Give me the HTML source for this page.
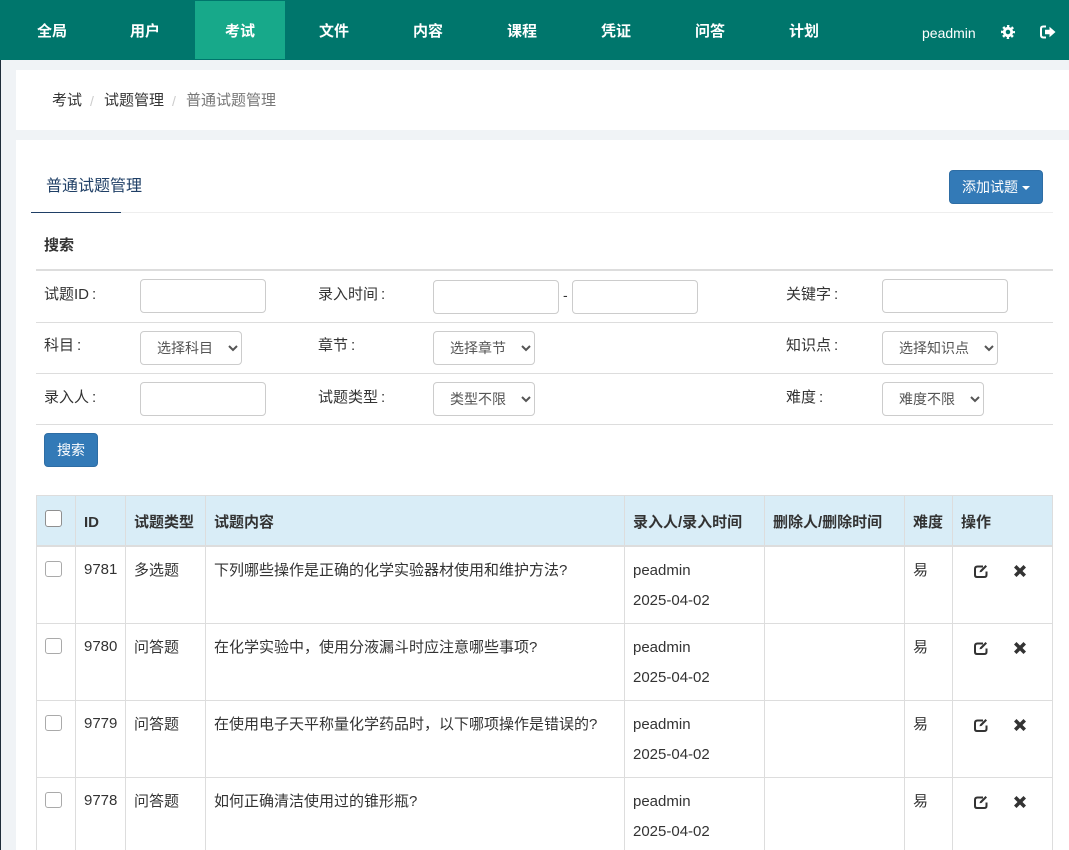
<!DOCTYPE html>
<html lang="zh-CN"><head><meta charset="utf-8"><title>普通试题管理</title>
<style>
html,body{margin:0;padding:0}
body{width:1069px;height:850px;overflow:hidden;position:relative;background:#f0f3f6;font-family:"Liberation Sans","Noto Sans CJK SC",sans-serif;font-size:15px;color:#333}
div,span.t,svg,input,select{position:absolute}
.t{position:absolute;line-height:20px;white-space:nowrap}
.n{font-weight:bold;color:#fff;top:22px;width:60px;text-align:center;font-size:15px}
.panel{background:#fff}
.l{background:#ddd;height:1px}
.v{background:#ddd;width:1px}
.ip{box-sizing:border-box;height:34px;width:126px;border:1px solid #ccc;border-radius:4px;background:#fff;margin:0;padding:0}
select{box-sizing:border-box;height:34px;border:1px solid #ccc;border-radius:4px;background:#fff;color:#555;font:14px "Liberation Sans","Noto Sans CJK SC",sans-serif;padding:0 6px 0 12px;margin:0}
.b{background:#337ab7;border:1px solid #2e6da4;border-radius:4px;box-sizing:border-box;color:#fff;font-size:14px;line-height:32px}
.h{font-weight:bold;top:513px}
.cb{appearance:none;-webkit-appearance:none;box-sizing:border-box;margin:0;width:17px;height:17px;background:#fff;border:1px solid #8f8f8f;border-radius:3px;left:45px}
.r{border-color:#aaa;height:16px}
.c{color:#333}
</style></head><body>
<div style="left:0;top:0;width:1069px;height:60px;background:#00766c"></div>
<div style="left:195px;top:1px;width:90px;height:58px;background:#17a98a"></div>
<span class="t n" style="left:22px">全局</span>
<span class="t n" style="left:115px">用户</span>
<span class="t n" style="left:210px">考试</span>
<span class="t n" style="left:304px">文件</span>
<span class="t n" style="left:398px">内容</span>
<span class="t n" style="left:492px">课程</span>
<span class="t n" style="left:586px">凭证</span>
<span class="t n" style="left:680px">问答</span>
<span class="t n" style="left:774px">计划</span>
<span class="t" style="left:922px;top:23px;color:#fff;font-size:14px">peadmin</span>
<svg style="left:1001px;top:25px" width="14" height="14" viewBox="0 0 14 14"><circle cx="7" cy="7" r="3.700" fill="none" stroke="#fff" stroke-width="2.900"/><circle cx="7" cy="7" r="5.800" fill="none" stroke="#fff" stroke-width="2.400" stroke-dasharray="2.280 2.275" stroke-dashoffset="1.140"/></svg>
<svg style="left:1040px;top:25px" width="16" height="14" viewBox="0 0 16 14"><path fill="none" stroke="#fff" stroke-width="2" d="M6 1.500H3.200Q1 1.500 1 3.700v6.600q0 2.200 2.200 2.200H6"/><path fill="#fff" d="M5 4.700h4.500V1.800L15.500 7l-6 5.200V9.300H5z"/></svg>
<div style="left:0;top:60px;width:1px;height:790px;background:#1f2d3a"></div>

<div class="panel" style="left:16px;top:70px;width:1053px;height:60px"></div>
<span class="t" style="left:52px;top:91px">考试</span>
<span class="t" style="left:90px;top:91px;color:#ccc;font-size:14px">/</span>
<span class="t" style="left:104px;top:91px">试题管理</span>
<span class="t" style="left:172px;top:91px;color:#ccc;font-size:14px">/</span>
<span class="t" style="left:186px;top:91px;color:#777">普通试题管理</span>

<div class="panel" style="left:16px;top:140px;width:1053px;height:710px"></div>
<span class="t" style="left:46px;top:177px;font-size:16px;color:#1f3f66">普通试题管理</span>
<div style="left:31px;top:212px;width:1022px;height:1px;background:#eee"></div>
<div style="left:31px;top:212px;width:90px;height:1px;background:#1f3f66"></div>
<div class="b" style="left:949px;top:170px;width:94px;height:34px;padding-left:12px">添加试题</div>
<div style="left:1022px;top:186px;width:0;height:0;border-left:4px solid transparent;border-right:4px solid transparent;border-top:4px solid #fff"></div>

<span class="t" style="left:44px;top:236px;font-weight:bold;font-size:15px">搜索</span>
<div class="l" style="left:36px;top:269px;width:1017px;height:2px"></div>
<div class="l" style="left:36px;top:322px;width:1017px"></div>
<div class="l" style="left:36px;top:373px;width:1017px"></div>
<div class="l" style="left:36px;top:424px;width:1017px"></div>

<span class="t" style="left:44px;top:285px">试题ID<span style="margin-left:3px">:</span></span>
<input class="ip" style="left:140px;top:279px">
<span class="t" style="left:318px;top:285px">录入时间<span style="margin-left:3px">:</span></span>
<input class="ip" style="left:433px;top:280px">
<span class="t" style="left:563px;top:285px;font-size:14px">-</span>
<input class="ip" style="left:572px;top:280px">
<span class="t" style="left:786px;top:285px">关键字<span style="margin-left:3px">:</span></span>
<input class="ip" style="left:882px;top:279px">

<span class="t" style="left:44px;top:336px">科目<span style="margin-left:3px">:</span></span>
<select style="left:140px;top:331px;width:102px"><option>选择科目</option></select>
<span class="t" style="left:318px;top:336px">章节<span style="margin-left:3px">:</span></span>
<select style="left:433px;top:331px;width:102px"><option>选择章节</option></select>
<span class="t" style="left:786px;top:336px">知识点<span style="margin-left:3px">:</span></span>
<select style="left:882px;top:331px;width:116px"><option>选择知识点</option></select>

<span class="t" style="left:44px;top:388px">录入人<span style="margin-left:3px">:</span></span>
<input class="ip" style="left:140px;top:382px">
<span class="t" style="left:318px;top:388px">试题类型<span style="margin-left:3px">:</span></span>
<select style="left:433px;top:382px;width:102px"><option>类型不限</option></select>
<span class="t" style="left:786px;top:388px">难度<span style="margin-left:3px">:</span></span>
<select style="left:882px;top:382px;width:102px"><option>难度不限</option></select>

<div class="b" style="left:44px;top:433px;width:54px;height:34px;text-align:center">搜索</div>

<!-- table -->
<div style="left:36px;top:495px;width:1017px;height:51px;background:#d9edf7"></div>
<div class="l" style="left:36px;top:495px;width:1017px"></div>
<div class="l" style="left:36px;top:545px;width:1017px;height:2px"></div>
<div class="l" style="left:36px;top:623px;width:1017px"></div>
<div class="l" style="left:36px;top:700px;width:1017px"></div>
<div class="l" style="left:36px;top:777px;width:1017px"></div>
<div class="v" style="left:36px;top:495px;height:355px"></div>
<div class="v" style="left:75px;top:495px;height:355px"></div>
<div class="v" style="left:125px;top:495px;height:355px"></div>
<div class="v" style="left:205px;top:495px;height:355px"></div>
<div class="v" style="left:624px;top:495px;height:355px"></div>
<div class="v" style="left:764px;top:495px;height:355px"></div>
<div class="v" style="left:904px;top:495px;height:355px"></div>
<div class="v" style="left:952px;top:495px;height:355px"></div>
<div class="v" style="left:1052px;top:495px;height:355px"></div>

<input type="checkbox" class="cb" style="top:510px">
<span class="t h" style="left:84px">ID</span>
<span class="t h" style="left:134px">试题类型</span>
<span class="t h" style="left:214px">试题内容</span>
<span class="t h" style="left:633px">录入人/录入时间</span>
<span class="t h" style="left:773px">删除人/删除时间</span>
<span class="t h" style="left:913px">难度</span>
<span class="t h" style="left:961px">操作</span>

<input type="checkbox" class="cb r" style="top:561px">
<span class="t" style="left:84px;top:560px">9781</span>
<span class="t" style="left:134px;top:561px">多选题</span>
<span class="t" style="left:214px;top:561px">下列哪些操作是正确的化学实验器材使用和维护方法?</span>
<span class="t" style="left:633px;top:561px">peadmin</span>
<span class="t" style="left:633px;top:591px">2025-04-02</span>
<span class="t" style="left:913px;top:561px">易</span>
<svg style="left:974px;top:564px" width="14" height="14" viewBox="0 0 14 14"><path fill="none" stroke="#333" stroke-width="2" d="M9 2.500H3.500Q1 2.500 1 5v6q0 2 2 2h7q2.500 0 2.500-2V7.500"/><path fill="#333" d="M6 6.500 11.500 1 13 2.500 7.500 8l-2 .3z"/></svg>
<svg style="left:1014px;top:565px" width="12" height="12" viewBox="0 0 12 12"><path fill="#333" d="M2.500 0 6 3.500 9.500 0 12 2.500 8.500 6 12 9.500 9.500 12 6 8.500 2.500 12 0 9.500 3.500 6 0 2.500z"/></svg>

<input type="checkbox" class="cb r" style="top:638px">
<span class="t" style="left:84px;top:637px">9780</span>
<span class="t" style="left:134px;top:638px">问答题</span>
<span class="t" style="left:214px;top:638px">在化学实验中，使用分液漏斗时应注意哪些事项?</span>
<span class="t" style="left:633px;top:638px">peadmin</span>
<span class="t" style="left:633px;top:668px">2025-04-02</span>
<span class="t" style="left:913px;top:638px">易</span>
<svg style="left:974px;top:641px" width="14" height="14" viewBox="0 0 14 14"><path fill="none" stroke="#333" stroke-width="2" d="M9 2.500H3.500Q1 2.500 1 5v6q0 2 2 2h7q2.500 0 2.500-2V7.500"/><path fill="#333" d="M6 6.500 11.500 1 13 2.500 7.500 8l-2 .3z"/></svg>
<svg style="left:1014px;top:642px" width="12" height="12" viewBox="0 0 12 12"><path fill="#333" d="M2.500 0 6 3.500 9.500 0 12 2.500 8.500 6 12 9.500 9.500 12 6 8.500 2.500 12 0 9.500 3.500 6 0 2.500z"/></svg>

<input type="checkbox" class="cb r" style="top:715px">
<span class="t" style="left:84px;top:714px">9779</span>
<span class="t" style="left:134px;top:715px">问答题</span>
<span class="t" style="left:214px;top:715px">在使用电子天平称量化学药品时，以下哪项操作是错误的?</span>
<span class="t" style="left:633px;top:715px">peadmin</span>
<span class="t" style="left:633px;top:745px">2025-04-02</span>
<span class="t" style="left:913px;top:715px">易</span>
<svg style="left:974px;top:718px" width="14" height="14" viewBox="0 0 14 14"><path fill="none" stroke="#333" stroke-width="2" d="M9 2.500H3.500Q1 2.500 1 5v6q0 2 2 2h7q2.500 0 2.500-2V7.500"/><path fill="#333" d="M6 6.500 11.500 1 13 2.500 7.500 8l-2 .3z"/></svg>
<svg style="left:1014px;top:719px" width="12" height="12" viewBox="0 0 12 12"><path fill="#333" d="M2.500 0 6 3.500 9.500 0 12 2.500 8.500 6 12 9.500 9.500 12 6 8.500 2.500 12 0 9.500 3.500 6 0 2.500z"/></svg>

<input type="checkbox" class="cb r" style="top:792px">
<span class="t" style="left:84px;top:791px">9778</span>
<span class="t" style="left:134px;top:792px">问答题</span>
<span class="t" style="left:214px;top:792px">如何正确清洁使用过的锥形瓶?</span>
<span class="t" style="left:633px;top:792px">peadmin</span>
<span class="t" style="left:633px;top:822px">2025-04-02</span>
<span class="t" style="left:913px;top:792px">易</span>
<svg style="left:974px;top:795px" width="14" height="14" viewBox="0 0 14 14"><path fill="none" stroke="#333" stroke-width="2" d="M9 2.500H3.500Q1 2.500 1 5v6q0 2 2 2h7q2.500 0 2.500-2V7.500"/><path fill="#333" d="M6 6.500 11.500 1 13 2.500 7.500 8l-2 .3z"/></svg>
<svg style="left:1014px;top:796px" width="12" height="12" viewBox="0 0 12 12"><path fill="#333" d="M2.500 0 6 3.500 9.500 0 12 2.500 8.500 6 12 9.500 9.500 12 6 8.500 2.500 12 0 9.500 3.500 6 0 2.500z"/></svg>
</body></html>
